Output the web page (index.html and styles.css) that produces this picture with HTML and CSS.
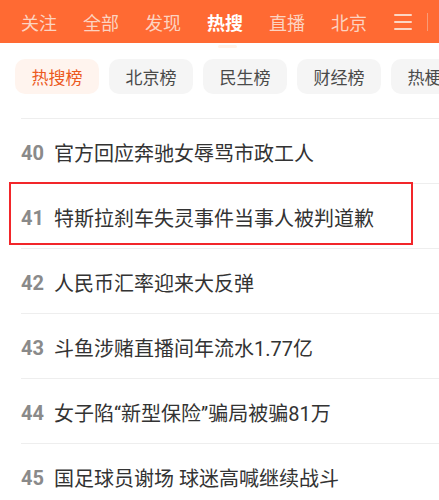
FILE: index.html
```html
<!DOCTYPE html>
<html>
<head>
	<meta charset="utf-8">
	<title>热搜</title>
	<link rel="stylesheet" href="styles.css">
</head>
<body>
	<div class="topBar">
		<span class="topTab">关注</span>
		<span class="topTab">全部</span>
		<span class="topTab">发现</span>
		<span class="topTab active">热搜</span>
		<span class="topTab">直播</span>
		<span class="topTab">北京</span>
		<span class="menuIcon">
			<svg width="18" height="18" viewBox="0 0 18 18">
				<rect x="0" y="1" width="18" height="2" rx="1" fill="#fcd6c4"/>
				<rect x="0" y="8" width="18" height="2" rx="1" fill="#fcd6c4"/>
				<rect x="0" y="15" width="18" height="2" rx="1" fill="#fcd6c4"/>
			</svg>
		</span>
		<span class="barDivider"></span>
	</div>

	<div class="chipRow">
		<span class="chip active">热搜榜</span>
		<span class="chip">北京榜</span>
		<span class="chip">民生榜</span>
		<span class="chip">财经榜</span>
		<span class="chip">热梗榜</span>
	</div>

	<ul class="hotList">
		<li class="hotItem"><span class="rank">40</span><span class="title">官方回应奔驰女辱骂市政工人</span></li>
		<li class="hotItem marked"><span class="rank">41</span><span class="title">特斯拉刹车失灵事件当事人被判道歉</span><span class="markBox"></span></li>
		<li class="hotItem"><span class="rank">42</span><span class="title">人民币汇率迎来大反弹</span></li>
		<li class="hotItem"><span class="rank">43</span><span class="title">斗鱼涉赌直播间年流水1.77亿</span></li>
		<li class="hotItem"><span class="rank">44</span><span class="title">女子陷“新型保险”骗局被骗81万</span></li>
		<li class="hotItem"><span class="rank">45</span><span class="title">国足球员谢场 球迷高喊继续战斗</span></li>
	</ul>
</body>
</html>
```

FILE: styles.css
```css
html, body {
	margin: 0;
	padding: 0;
	background-color: #ffffff;
	font-family: "Noto Sans CJK SC", "Noto Sans", sans-serif;
}

body {
	width: 439px;
	height: 500px;
	overflow: hidden;
}

/* top orange bar */
.topBar {
	display: flex;
	align-items: center;
	height: 43px;
	padding-left: 21px;
	gap: 26px;
	background-color: #ff6a33;
	position: relative;
}

.topTab {
	font-size: 18px;
	line-height: 18px;
	color: #fcd3c1;
	white-space: nowrap;
	position: relative;
}

.topTab.active {
	color: #ffffff;
	font-weight: bold;
}

.topTab.active::after {
	content: "";
	position: absolute;
	left: 11px;
	bottom: -17px;
	width: 19px;
	height: 3px;
	border-radius: 2px;
	background-color: #fff3ea;
}

.menuIcon {
	display: flex;
	margin-left: 1px;
}

.barDivider {
	width: 1px;
	height: 18px;
	margin-left: -11px;
	background-color: #f99b76;
}

/* chips */
.chipRow {
	display: flex;
	gap: 10px;
	padding: 16px 0 0 15px;
	margin-bottom: 24px;
	white-space: nowrap;
	overflow: hidden;
}

.chip {
	flex: none;
	width: 84px;
	height: 35px;
	line-height: 35px;
	text-align: center;
	font-size: 17px;
	color: #4a4a4a;
	background-color: #f5f5f5;
	border-radius: 10px;
}

.chip.active {
	color: #ec5a1f;
	background-color: #fff4ee;
}

/* hot list */
.hotList {
	list-style: none;
	margin: 0 0 0 21px;
	padding: 0;
	border-top: 1px solid #eeeeee;
}

.hotItem {
	display: flex;
	align-items: center;
	height: 64px;
	border-bottom: 1px solid #eeeeee;
	position: relative;
}

.rank {
	font-family: Roboto, "Liberation Sans", sans-serif;
	font-weight: bold;
	font-size: 20px;
	color: #8a8a8a;
	margin-right: 10px;
	padding-top: 3px;
}

.title {
	font-family: Roboto, "Noto Sans CJK SC", sans-serif;
	font-size: 20px;
	color: #333333;
	white-space: nowrap;
	padding-top: 2px;
}

/* red annotation frame */
.markBox {
	position: absolute;
	left: -12px;
	top: -2px;
	width: 400px;
	height: 59px;
	border: 2px solid #f2262a;
}
```
